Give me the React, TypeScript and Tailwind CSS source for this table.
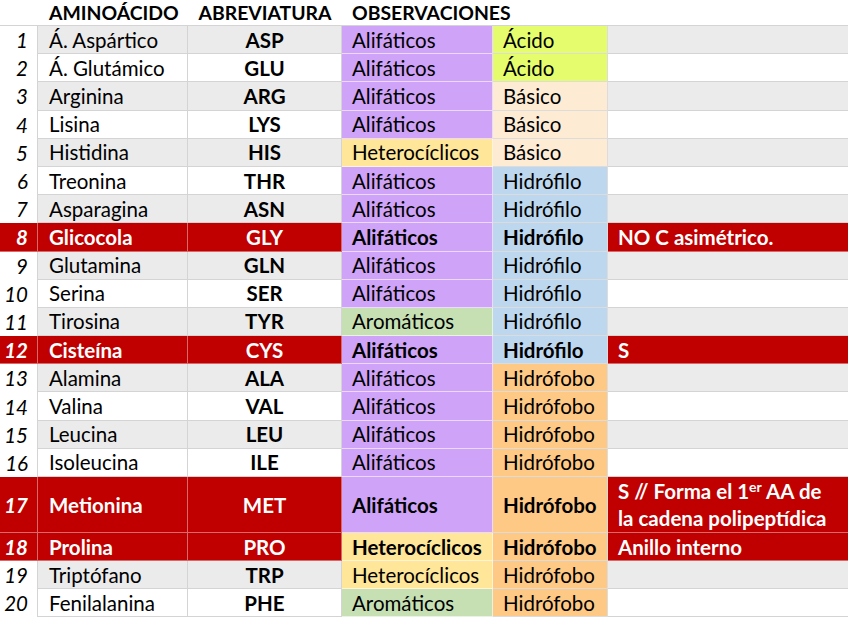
import React from "react";

type Row = {
  n: number;
  name: string;
  abbr: string;
  g1: string;
  g2: string;
  note?: React.ReactNode;
  red?: boolean;
  tall?: boolean;
};

const g1Bg: Record<string, string> = {
  "Alifáticos": "bg-[#cfa3f7]",
  "Heterocíclicos": "bg-[#ffe699]",
  "Aromáticos": "bg-[#c6e0b4]",
};

const g2Bg: Record<string, string> = {
  "Ácido": "bg-[#e5fd6d]",
  "Básico": "bg-[#fdebd4]",
  "Hidrófilo": "bg-[#bdd7ee]",
  "Hidrófobo": "bg-[#fec985]",
};

const rows: Row[] = [
  { n: 1, name: "Á. Aspártico", abbr: "ASP", g1: "Alifáticos", g2: "Ácido" },
  { n: 2, name: "Á. Glutámico", abbr: "GLU", g1: "Alifáticos", g2: "Ácido" },
  { n: 3, name: "Arginina", abbr: "ARG", g1: "Alifáticos", g2: "Básico" },
  { n: 4, name: "Lisina", abbr: "LYS", g1: "Alifáticos", g2: "Básico" },
  { n: 5, name: "Histidina", abbr: "HIS", g1: "Heterocíclicos", g2: "Básico" },
  { n: 6, name: "Treonina", abbr: "THR", g1: "Alifáticos", g2: "Hidrófilo" },
  { n: 7, name: "Asparagina", abbr: "ASN", g1: "Alifáticos", g2: "Hidrófilo" },
  { n: 8, name: "Glicocola", abbr: "GLY", g1: "Alifáticos", g2: "Hidrófilo", note: "NO C asimétrico.", red: true },
  { n: 9, name: "Glutamina", abbr: "GLN", g1: "Alifáticos", g2: "Hidrófilo" },
  { n: 10, name: "Serina", abbr: "SER", g1: "Alifáticos", g2: "Hidrófilo" },
  { n: 11, name: "Tirosina", abbr: "TYR", g1: "Aromáticos", g2: "Hidrófilo" },
  { n: 12, name: "Cisteína", abbr: "CYS", g1: "Alifáticos", g2: "Hidrófilo", note: "S", red: true },
  { n: 13, name: "Alamina", abbr: "ALA", g1: "Alifáticos", g2: "Hidrófobo" },
  { n: 14, name: "Valina", abbr: "VAL", g1: "Alifáticos", g2: "Hidrófobo" },
  { n: 15, name: "Leucina", abbr: "LEU", g1: "Alifáticos", g2: "Hidrófobo" },
  { n: 16, name: "Isoleucina", abbr: "ILE", g1: "Alifáticos", g2: "Hidrófobo" },
  {
    n: 17,
    name: "Metionina",
    abbr: "MET",
    g1: "Alifáticos",
    g2: "Hidrófobo",
    note: (
      <span className="leading-[26.5px]">
        S // Forma el 1<sup className="text-[14px]">er</sup> AA de
        <br />
        la cadena polipeptídica
      </span>
    ),
    red: true,
    tall: true,
  },
  { n: 18, name: "Prolina", abbr: "PRO", g1: "Heterocíclicos", g2: "Hidrófobo", note: "Anillo interno", red: true },
  { n: 19, name: "Triptófano", abbr: "TRP", g1: "Heterocíclicos", g2: "Hidrófobo" },
  { n: 20, name: "Fenilalanina", abbr: "PHE", g1: "Aromáticos", g2: "Hidrófobo" },
];

const cols = "grid grid-cols-[38px_150px_154px_151px_115px_1fr] grid-rows-[100%]";

export default function App() {
  return (
    <div
      className="w-[848px] h-[619px] bg-white text-black overflow-hidden text-[20.5px] leading-[22px]"
      style={{ fontFamily: "Lato, 'Open Sans', sans-serif" }}
    >
      <div className={`${cols} h-[26px] border-b border-[#d4d4d4] font-bold text-[19.4px]`}>
        <div />
        <div className="pl-[11px] flex items-center whitespace-nowrap">AMINOÁCIDO</div>
        <div className="flex items-center justify-center whitespace-nowrap">ABREVIATURA</div>
        <div className="pl-[10px] flex items-center whitespace-nowrap col-span-3">OBSERVACIONES</div>
      </div>
      {rows.map((r) => {
        const odd = r.n % 2 === 1;
        const baseBg = r.red ? "bg-[#c00000] text-white font-bold" : odd ? "bg-[#ebebeb]" : "bg-white";
        const baseBorder = r.red ? "border-[#d66a6a]" : "border-[#d4d4d4]";
        const h = r.tall ? "h-[56px]" : r.n > 17 ? "h-[28px]" : "h-[28.2px]";
        return (
          <div key={r.n} className={`${cols} ${h}`}>
            <div
              className={`flex items-center justify-end pr-[9px] italic border-r ${
                r.red ? "bg-[#c00000] text-white font-bold border-[#d66a6a] border-b" : "bg-white border-[#d4d4d4]"
              }`}
            >
              {r.n}
            </div>
            <div
              className={`flex items-center pl-[11px] border-r border-b whitespace-nowrap ${baseBg} ${baseBorder}`}
            >
              {r.name}
            </div>
            <div
              className={`flex items-center justify-center font-bold border-r border-b ${baseBg} ${baseBorder}`}
            >
              {r.abbr}
            </div>
            <div
              className={`flex items-center pl-[10px] border-r border-b border-white/60 whitespace-nowrap ${
                g1Bg[r.g1]
              } ${r.red ? "font-bold" : ""}`}
            >
              {r.g1}
            </div>
            <div
              className={`flex items-center pl-[10px] border-r border-b border-[#dcdcdc] whitespace-nowrap ${
                g2Bg[r.g2]
              } ${r.red ? "font-bold" : ""}`}
            >
              {r.g2}
            </div>
            <div className={`flex items-center pl-[10px] border-b whitespace-nowrap ${baseBg} ${baseBorder}`}>
              {r.note ?? ""}
            </div>
          </div>
        );
      })}
    </div>
  );
}
